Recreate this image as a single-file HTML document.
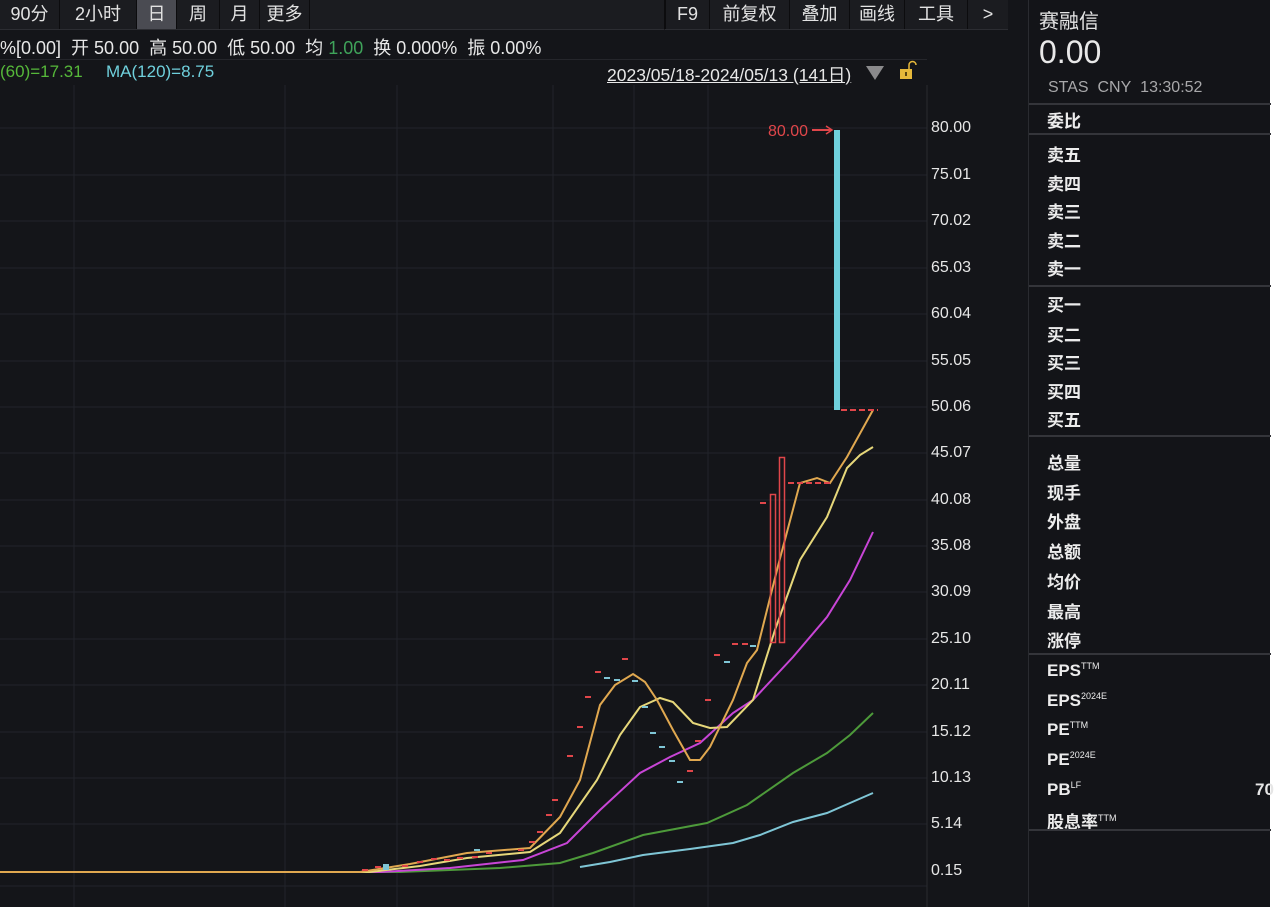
<!DOCTYPE html>
<html><head><meta charset="utf-8"><style>
*{margin:0;padding:0;box-sizing:border-box}
body{width:1274px;height:913px;background:#fff;overflow:hidden;position:relative;font-family:"Liberation Sans","Noto Sans CJK SC",sans-serif;color:#e6e6e6}
#main{position:absolute;left:0;top:0;width:1270px;height:907px;background:#141519}
.tb{position:absolute;top:0;height:30px;display:flex;background:#1b1c20;border-bottom:1px solid #2c2d32}
.tb div{flex:none;text-align:center;white-space:nowrap;font-size:18px;line-height:29px;border-right:1px solid #0c0c0e;color:#e2e2e2}
.tb div.sel{background:#4a4b52}
.t{position:absolute;white-space:nowrap}
.ax{position:absolute;left:931px;font-size:16px;color:#e6e6e6}
.rp{position:absolute;left:1028px;top:0;width:242px;height:907px;background:#131418;border-left:1px solid #2a2b30}
.rp .hl{position:absolute;left:0;width:242px;height:2px;background:#34353a}
.rp .l{position:absolute;left:18px;font-size:17px;color:#ececec;font-weight:bold;white-space:nowrap}
sup{font-size:9px;vertical-align:7px;font-weight:normal}
</style></head><body>
<div id="main">
<svg width="1008" height="907" style="position:absolute;left:0;top:0">
<g stroke="#22242a" stroke-width="1">
<line x1="74" y1="85" x2="74" y2="907"/><line x1="285" y1="85" x2="285" y2="907"/><line x1="397" y1="85" x2="397" y2="907"/><line x1="553" y1="85" x2="553" y2="907"/><line x1="634" y1="85" x2="634" y2="907"/><line x1="708" y1="85" x2="708" y2="907"/>
<line x1="0" y1="128" x2="927" y2="128"/><line x1="0" y1="175" x2="927" y2="175"/><line x1="0" y1="221" x2="927" y2="221"/><line x1="0" y1="268" x2="927" y2="268"/><line x1="0" y1="314" x2="927" y2="314"/><line x1="0" y1="361" x2="927" y2="361"/><line x1="0" y1="407" x2="927" y2="407"/><line x1="0" y1="453" x2="927" y2="453"/><line x1="0" y1="500" x2="927" y2="500"/><line x1="0" y1="546" x2="927" y2="546"/><line x1="0" y1="592" x2="927" y2="592"/><line x1="0" y1="639" x2="927" y2="639"/><line x1="0" y1="685" x2="927" y2="685"/><line x1="0" y1="732" x2="927" y2="732"/><line x1="0" y1="778" x2="927" y2="778"/><line x1="0" y1="824" x2="927" y2="824"/><line x1="0" y1="886" x2="927" y2="886"/>
</g>
<line x1="927" y1="85" x2="927" y2="907" stroke="#2a2b30"/>
<rect x="1008" y="0" width="20" height="907" fill="#1b1c20"/>
<g fill="none" stroke-width="2">
<polyline stroke="#7fc6d6" points="580,867 610,862 643,855 690,849 733,843 760,835 793,822 827,813 850,803 873,793"/>
<polyline stroke="#4d9a3a" points="0,872 400,872 500,868 560,863 593,853 643,835 707,823 747,805 793,773 827,753 850,735 873,713"/>
<polyline stroke="#c845d6" points="0,872 380,872 450,868 523,860 567,843 600,810 640,773 670,757 700,743 733,713 753,700 793,657 827,617 850,580 873,532"/>
<polyline stroke="#e6d77a" points="0,872 370,872 420,866 467,858 530,852 560,833 597,780 620,735 640,707 660,698 673,702 693,723 710,728 727,727 753,700 775,630 800,560 827,517 847,468 860,455 873,447"/>
<polyline stroke="#e0a850" points="0,872 360,872 410,864 467,853 530,848 560,817 580,780 600,705 615,685 633,674 645,682 657,700 673,730 690,760 700,760 710,747 733,700 747,663 757,650 778,566 800,483 817,478 830,483 847,457 873,410"/>
</g>
<g stroke="#e0464a" stroke-width="2">
<line x1="552" y1="800" x2="558" y2="800"/><line x1="546" y1="815" x2="552" y2="815"/><line x1="537" y1="832" x2="543" y2="832"/><line x1="529" y1="842" x2="535" y2="842"/><line x1="518" y1="850" x2="524" y2="850"/><line x1="486" y1="853" x2="492" y2="853"/><line x1="472" y1="857" x2="478" y2="857"/><line x1="457" y1="858" x2="463" y2="858"/><line x1="444" y1="860" x2="450" y2="860"/><line x1="431" y1="859" x2="437" y2="859"/><line x1="417" y1="862" x2="423" y2="862"/><line x1="402" y1="866" x2="408" y2="866"/><line x1="375" y1="867" x2="381" y2="867"/><line x1="362" y1="870" x2="368" y2="870"/>
<line x1="567" y1="756" x2="573" y2="756"/><line x1="577" y1="727" x2="583" y2="727"/><line x1="585" y1="697" x2="591" y2="697"/><line x1="595" y1="672" x2="601" y2="672"/><line x1="622" y1="659" x2="628" y2="659"/><line x1="687" y1="771" x2="693" y2="771"/><line x1="695" y1="741" x2="701" y2="741"/><line x1="705" y1="700" x2="711" y2="700"/><line x1="714" y1="655" x2="720" y2="655"/><line x1="732" y1="644" x2="738" y2="644"/><line x1="742" y1="644" x2="748" y2="644"/><line x1="760" y1="503" x2="766" y2="503"/>
<line x1="788" y1="483" x2="830" y2="483" stroke-dasharray="6,3"/><line x1="841" y1="410" x2="878" y2="410" stroke-dasharray="6,3"/>
<line x1="812" y1="130" x2="832" y2="130"/>
</g>
<polyline points="826,126 832,130 826,134" fill="none" stroke="#e0464a" stroke-width="1.5"/>
<g stroke="#7fc6d6" stroke-width="2">
<line x1="604" y1="678" x2="610" y2="678"/><line x1="614" y1="680" x2="620" y2="680"/><line x1="632" y1="681" x2="638" y2="681"/><line x1="642" y1="707" x2="648" y2="707"/><line x1="650" y1="733" x2="656" y2="733"/><line x1="659" y1="747" x2="665" y2="747"/><line x1="669" y1="761" x2="675" y2="761"/><line x1="677" y1="782" x2="683" y2="782"/><line x1="724" y1="662" x2="730" y2="662"/><line x1="750" y1="646" x2="756" y2="646"/><line x1="474" y1="850" x2="480" y2="850"/>
</g>
<rect x="383" y="864" width="6" height="6" fill="#7fc6d6"/>
<rect x="770.5" y="494.5" width="5" height="148" fill="none" stroke="#e0464a" stroke-width="1.5"/>
<rect x="779.5" y="457.5" width="5" height="185" fill="none" stroke="#e0464a" stroke-width="1.5"/>
<rect x="834" y="130" width="6" height="280" fill="#6fd0dc"/>
<text x="768" y="136" fill="#e0464a" font-size="16" font-family="Liberation Sans">80.00</text>
<polygon points="866,66 884,66 875,80" fill="#8a8a8c"/>
<rect x="900" y="69" width="12" height="10" fill="#e6b83a"/>
<path d="M909,69 v-4 a3.5,3.5 0 0 1 7,0" fill="none" stroke="#e6b83a" stroke-width="1.5"/>
<rect x="905" y="72" width="2" height="4" fill="#5a4510"/>
<polygon points="1013,752 1026,760 1013,768" fill="#fff"/>
</svg>
<div class="tb" style="left:0;width:310px"><div style="width:60px">90分</div><div style="width:77px">2小时</div><div class="sel" style="width:40px">日</div><div style="width:43px">周</div><div style="width:40px">月</div><div style="width:50px">更多</div></div>
<div class="tb" style="left:310px;width:355px;border-right:1px solid #0c0c0e"></div>
<div class="tb" style="left:665px;width:343px"><div style="width:45px;border-left:1px solid #0c0c0e">F9</div><div style="width:80px">前复权</div><div style="width:60px">叠加</div><div style="width:55px">画线</div><div style="width:63px">工具</div><div style="width:40px;border-right:none">&gt;</div></div>
<div class="t" style="left:0;top:34px;font-size:18px;color:#e8e8e8">%[0.00]&nbsp; 开 50.00&nbsp; 高 50.00&nbsp; 低 50.00&nbsp; 均 <span style="color:#3fa35a">1.00</span>&nbsp; 换 0.000%&nbsp; 振 0.00%</div>
<div style="position:absolute;left:0;top:59px;width:927px;height:1px;background:#25262b"></div>
<div class="t" style="left:0;top:62px;font-size:17px;color:#56b83a">(60)=17.31</div>
<div class="t" style="left:106px;top:62px;font-size:17px;color:#6fd0dc">MA(120)=8.75</div>
<div class="t" style="left:607px;top:62px;font-size:17.5px;color:#e8e8e8;text-decoration:underline">2023/05/18-2024/05/13 (141日)</div>
<div class="ax" style="top:119px">80.00</div><div class="ax" style="top:166px">75.01</div><div class="ax" style="top:212px">70.02</div><div class="ax" style="top:259px">65.03</div><div class="ax" style="top:305px">60.04</div><div class="ax" style="top:352px">55.05</div><div class="ax" style="top:398px">50.06</div><div class="ax" style="top:444px">45.07</div><div class="ax" style="top:491px">40.08</div><div class="ax" style="top:537px">35.08</div><div class="ax" style="top:583px">30.09</div><div class="ax" style="top:630px">25.10</div><div class="ax" style="top:676px">20.11</div><div class="ax" style="top:723px">15.12</div><div class="ax" style="top:769px">10.13</div><div class="ax" style="top:815px">5.14</div><div class="ax" style="top:862px">0.15</div>
<div class="rp">
<div class="t" style="left:10px;top:5px;font-size:20px">赛融信</div>
<div class="t" style="left:10px;top:34px;font-size:32px;color:#e8e8e8">0.00</div>
<div class="t" style="left:19px;top:79px;font-size:16px;color:#a8a8aa">STAS&nbsp; CNY&nbsp; 13:30:52</div>
<div class="hl" style="top:103px"></div>
<div class="l" style="top:107px">委比</div>
<div class="hl" style="top:133px"></div>
<div class="l" style="top:141px">卖五</div><div class="l" style="top:170px">卖四</div><div class="l" style="top:198px">卖三</div><div class="l" style="top:227px">卖二</div><div class="l" style="top:255px">卖一</div>
<div class="hl" style="top:285px"></div>
<div class="l" style="top:291px">买一</div><div class="l" style="top:321px">买二</div><div class="l" style="top:349px">买三</div><div class="l" style="top:378px">买四</div><div class="l" style="top:406px">买五</div>
<div class="hl" style="top:435px"></div>
<div class="l" style="top:449px">总量</div><div class="l" style="top:479px">现手</div><div class="l" style="top:508px">外盘</div><div class="l" style="top:538px">总额</div><div class="l" style="top:568px">均价</div><div class="l" style="top:598px">最高</div><div class="l" style="top:627px">涨停</div>
<div class="hl" style="top:653px"></div>
<div class="l" style="top:661px">EPS<sup>TTM</sup></div><div class="l" style="top:691px">EPS<sup>2024E</sup></div><div class="l" style="top:720px">PE<sup>TTM</sup></div><div class="l" style="top:750px">PE<sup>2024E</sup></div><div class="l" style="top:780px">PB<sup>LF</sup></div><div class="l" style="top:808px">股息率<sup>TTM</sup></div>
<div class="t" style="left:226px;top:780px;font-size:17px;font-weight:bold">70</div>
<div class="hl" style="top:829px"></div>
</div>
</div>
</body></html>
